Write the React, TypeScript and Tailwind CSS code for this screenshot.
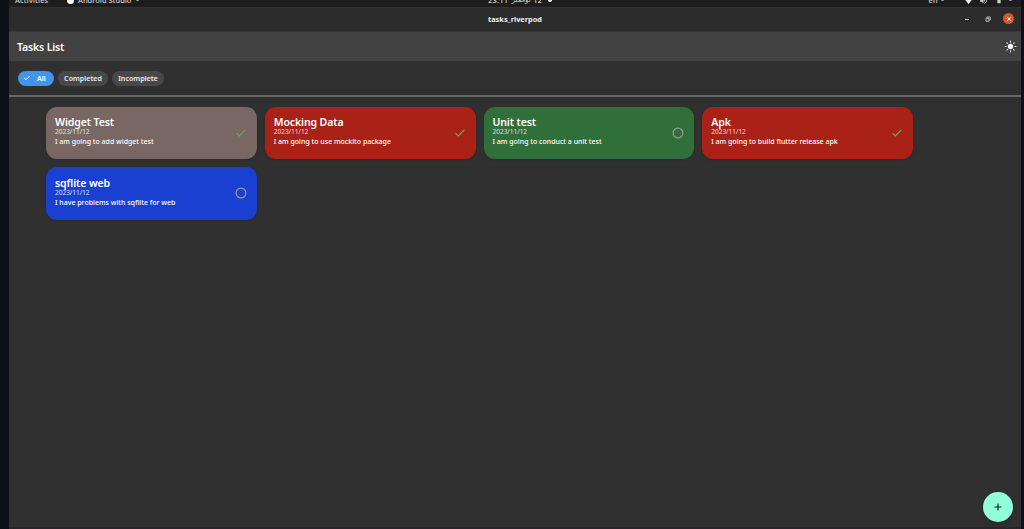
import { Check } from 'lucide-react'
import { MdLightMode, MdSignalWifi4Bar, MdVolumeUp, MdBatteryFull } from 'react-icons/md'

type Task = {
  title: string
  date: string
  description: string
  color: string
  done: boolean
}

const tasks: Task[] = [
  { title: 'Widget Test', date: '2023/11/12', description: 'I am going to add widget test', color: 'bg-[#796763]', done: true },
  { title: 'Mocking Data', date: '2023/11/12', description: 'I am going to use mockito package', color: 'bg-[#a92117]', done: true },
  { title: 'Unit test', date: '2023/11/12', description: 'I am going to conduct a unit test', color: 'bg-[#316f3a]', done: false },
  { title: 'Apk', date: '2023/11/12', description: 'I am going to build flutter release apk', color: 'bg-[#a92117]', done: true },
  { title: 'sqflite web', date: '2023/11/12', description: 'I have problems with sqflite for web', color: 'bg-[#1a40d1]', done: false },
]

function SystemBar() {
  return (
    <div className="h-[7px] shrink-0 overflow-hidden bg-[#1d1d1d] text-[7.5px] font-medium leading-[10px] text-[#d0d0d0]">
      <div className="-mt-[5px] flex h-[10px] items-center">
        <span className="ml-[6px] w-[52px] tracking-[0.1px]">Activities</span>
        <span className="mr-[4px] h-[7px] w-[7px] rounded-full bg-white" />
        <span className="w-[54px] whitespace-nowrap">Android Studio</span>
        <span className="ml-[4px] h-[2px] w-[3px] rounded-full bg-[#999]" />
        <span className="ml-[349px] tracking-[0.2px]">23:11</span>
        <span className="ml-[2px] w-[22px] text-center text-[7px]">نوفمبر</span>
        <span className="ml-[1px]">12</span>
        <span className="ml-[6px] h-[4px] w-[4px] rounded-full bg-white" />
        <span className="ml-auto mr-[3px] tracking-[0.2px]">en</span>
        <span className="mr-[20px] h-[2px] w-[3px] rounded-full bg-[#999]" />
        <MdSignalWifi4Bar className="mr-[6px] h-[9px] w-[9px] text-white" />
        <MdVolumeUp className="mr-[7px] h-[9px] w-[9px]" />
        <MdBatteryFull className="mr-[6px] h-[8px] w-[8px]" />
        <span className="mr-[9px] h-[2px] w-[3px] rounded-full bg-[#999]" />
      </div>
    </div>
  )
}

function TitleBar() {
  return (
    <div className="flex h-[24px] shrink-0 items-center border-t border-[#333] bg-[#2c2c2c] pb-[2px]">
      <div className="w-[120px]" />
      <h1 className="flex-1 text-center text-[7.4px] font-bold leading-[10px] text-[#f0f0f0]">tasks_riverpod</h1>
      <div className="flex w-[120px] items-center justify-end pr-[7px]">
        <span className="mt-[2px] h-px w-[4px] bg-[#ccc]" />
        <svg viewBox="0 0 6 6" className="ml-[16px] h-[6px] w-[6px]" fill="none" stroke="#bbb" strokeWidth="1">
          <path d="M1 2.2h3v3H1zM2 2.2V1h3.2v3H4" />
        </svg>
        <span className="ml-[12px] flex h-[11px] w-[11px] items-center justify-center rounded-full bg-[#dc5429]">
          <svg viewBox="0 0 6 6" className="h-[6px] w-[6px]" stroke="#fff" strokeWidth="1">
            <path d="M1 1l4 4M5 1L1 5" />
          </svg>
        </span>
      </div>
    </div>
  )
}

function Filters() {
  return (
    <div className="flex h-[34px] shrink-0 items-center gap-[4px] pl-[9px] text-[7.1px] font-semibold leading-[10px] text-[#eee]">
      <button className="flex h-[15px] w-[36px] items-center rounded-full bg-[#4494ec] pl-[5px] text-white">
        <Check className="mr-[6px] h-[8px] w-[8px]" strokeWidth={3} />
        All
      </button>
      <button className="h-[15px] w-[50px] rounded-full bg-[#484848]">Completed</button>
      <button className="h-[15px] w-[52px] rounded-full bg-[#484848]">Incomplete</button>
    </div>
  )
}

function TaskCard({ task }: { task: Task }) {
  return (
    <div className={`flex h-[52.6px] items-center justify-between rounded-[11px] pl-[9px] pr-[10px] shadow-sm ${task.color}`}>
      <div className="-mt-[2px] whitespace-nowrap text-white">
        <h2 className="text-[10.5px] font-semibold leading-[12px] tracking-[-0.1px]">{task.title}</h2>
        <p className="text-[6.5px] leading-[7px] text-white/80">{task.date}</p>
        <p className="mt-[2px] text-[7px] font-medium leading-[10px]">{task.description}</p>
      </div>
      {task.done ? (
        <svg viewBox="0 0 12 12" className="h-[12px] w-[12px]" fill="none" stroke="#5cae55" strokeWidth="1.2">
          <path d="M1.5 6.2l2.8 2.8L10.4 2.9" />
        </svg>
      ) : (
        <svg viewBox="0 0 12 12" className="h-[12px] w-[12px]" fill="none" stroke="#999" strokeWidth="1.2">
          <circle cx="6" cy="6" r="4.9" />
        </svg>
      )}
    </div>
  )
}

export default function App() {
  return (
    <div className="h-[529px] w-[1024px] bg-[#0d1117] pl-[9px] pr-[3px] font-['Noto_Sans','DejaVu_Sans',sans-serif]">
      <div className="relative flex h-full flex-col bg-[#303030]">
        <SystemBar />
        <TitleBar />
        <header className="flex h-[30px] shrink-0 items-center justify-between border-t border-[#383838] bg-[#424242] pl-[8px] pr-[4px]">
          <span className="text-[10.5px] font-semibold leading-[14px] tracking-[-0.15px] text-white">Tasks List</span>
          <MdLightMode className="h-[13px] w-[13px] text-white" />
        </header>
        <Filters />
        <div className="h-[1.5px] shrink-0 bg-[#666]" />
        <main className="grid grid-cols-4 gap-[8px] pl-[37px] pr-[108px] pt-[10px]">
          {tasks.map((task) => (
            <TaskCard key={task.title} task={task} />
          ))}
        </main>
        <button className="absolute bottom-[7px] right-[8.5px] flex h-[30px] w-[30px] items-center justify-center rounded-full bg-[#92ffdb] shadow-md">
          <svg viewBox="0 0 8 8" className="h-[8px] w-[8px]" stroke="#10251f" strokeWidth="1.2">
            <path d="M4 .4v7.2M.4 4h7.2" />
          </svg>
        </button>
        <div className="mt-auto h-[2px] shrink-0 bg-[#2a2529]" />
      </div>
    </div>
  )
}
